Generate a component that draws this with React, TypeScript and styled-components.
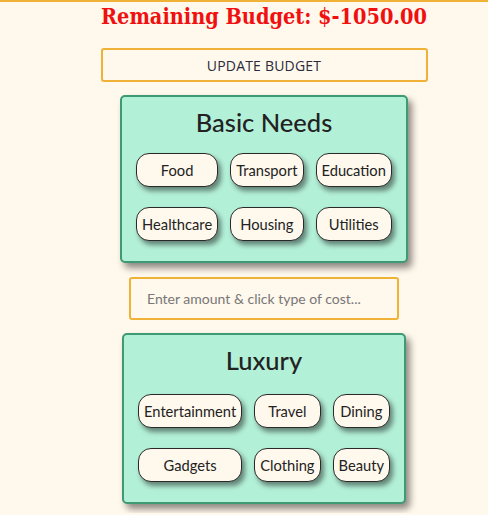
import React from "react";
import styled, { createGlobalStyle } from "styled-components";

const Global = createGlobalStyle`
  html, body { margin: 0; padding: 0; background: #fff8ec; }
  body { font-family: Lato, "Noto Sans", sans-serif; color: #222; }
`;

const Page = styled.div`
  border-top: 2px solid #efb236;
  min-height: 513px;
  display: flex;
  flex-direction: column;
  align-items: center;
  padding-left: 40px;
  box-sizing: border-box;
`;

const Title = styled.h1`
  margin: 1px 0 0;
  font-family: "DejaVu Serif Condensed", "DejaVu Serif", "Liberation Serif", serif;
  font-stretch: condensed;
  font-weight: bold;
  font-size: 21.5px;
  line-height: 28px;
  color: #f01010;
  white-space: nowrap;
`;

const UpdateButton = styled.button`
  margin-top: 17px;
  width: 327px;
  height: 34px;
  background: transparent;
  border: 2px solid #efb236;
  border-radius: 3px;
  font-family: "Open Sans", Lato, sans-serif;
  font-size: 14px;
  color: #2a2a3a;
  letter-spacing: 0.2px;
`;

const Card = styled.section<{ $top: number }>`
  margin-top: ${(p) => p.$top}px;
  background: #b3f0d8;
  border: 2px solid #3d9a72;
  border-radius: 5px;
  padding: 0 14px 20px;
  box-shadow: 4px 5px 7px rgba(0, 0, 0, 0.45);
  display: flex;
  flex-direction: column;
  align-items: center;
`;

const CardTitle = styled.h2`
  margin: 8px 0 0;
  font-family: Lato, sans-serif;
  font-weight: 500;
  font-size: 25.5px;
  line-height: 34px;
  color: #222;
`;

const Grid = styled.div<{ $top: number }>`
  margin-top: ${(p) => p.$top}px;
  display: grid;
  grid-template-columns: repeat(3, auto);
  column-gap: 12px;
  row-gap: 20px;
`;

const Chip = styled.button`
  height: 34px;
  padding: 0 5px;
  background: #fff8ec;
  border: 1px solid #2a2a2a;
  border-radius: 13px;
  box-shadow: 3px 4px 5px rgba(0, 0, 0, 0.45);
  font-family: Lato, sans-serif;
  font-size: 14.7px;
  color: #222;
  white-space: nowrap;
`;

const AmountInput = styled.input`
  margin-top: 14px;
  width: 270px;
  height: 43px;
  box-sizing: border-box;
  border: 2px solid #efb236;
  border-radius: 3px;
  background: transparent;
  padding: 0 16px;
  font-family: Lato, sans-serif;
  font-size: 14px;
  color: #222;
  &::placeholder { color: #777; }
`;

const basic = ["Food", "Transport", "Education", "Healthcare", "Housing", "Utilities"];
const luxury = ["Entertainment", "Travel", "Dining", "Gadgets", "Clothing", "Beauty"];

export default function App() {
  return (
    <>
      <Global />
      <Page>
        <Title>Remaining Budget: $-1050.00</Title>
        <UpdateButton>UPDATE BUDGET</UpdateButton>
        <Card $top={13}>
          <CardTitle>Basic Needs</CardTitle>
          <Grid $top={14}>
            {basic.map((b) => (
              <Chip key={b}>{b}</Chip>
            ))}
          </Grid>
        </Card>
        <AmountInput placeholder="Enter amount & click type of cost..." />
        <Card $top={13}>
          <CardTitle>Luxury</CardTitle>
          <Grid $top={17}>
            {luxury.map((b) => (
              <Chip key={b}>{b}</Chip>
            ))}
          </Grid>
        </Card>
      </Page>
    </>
  );
}
